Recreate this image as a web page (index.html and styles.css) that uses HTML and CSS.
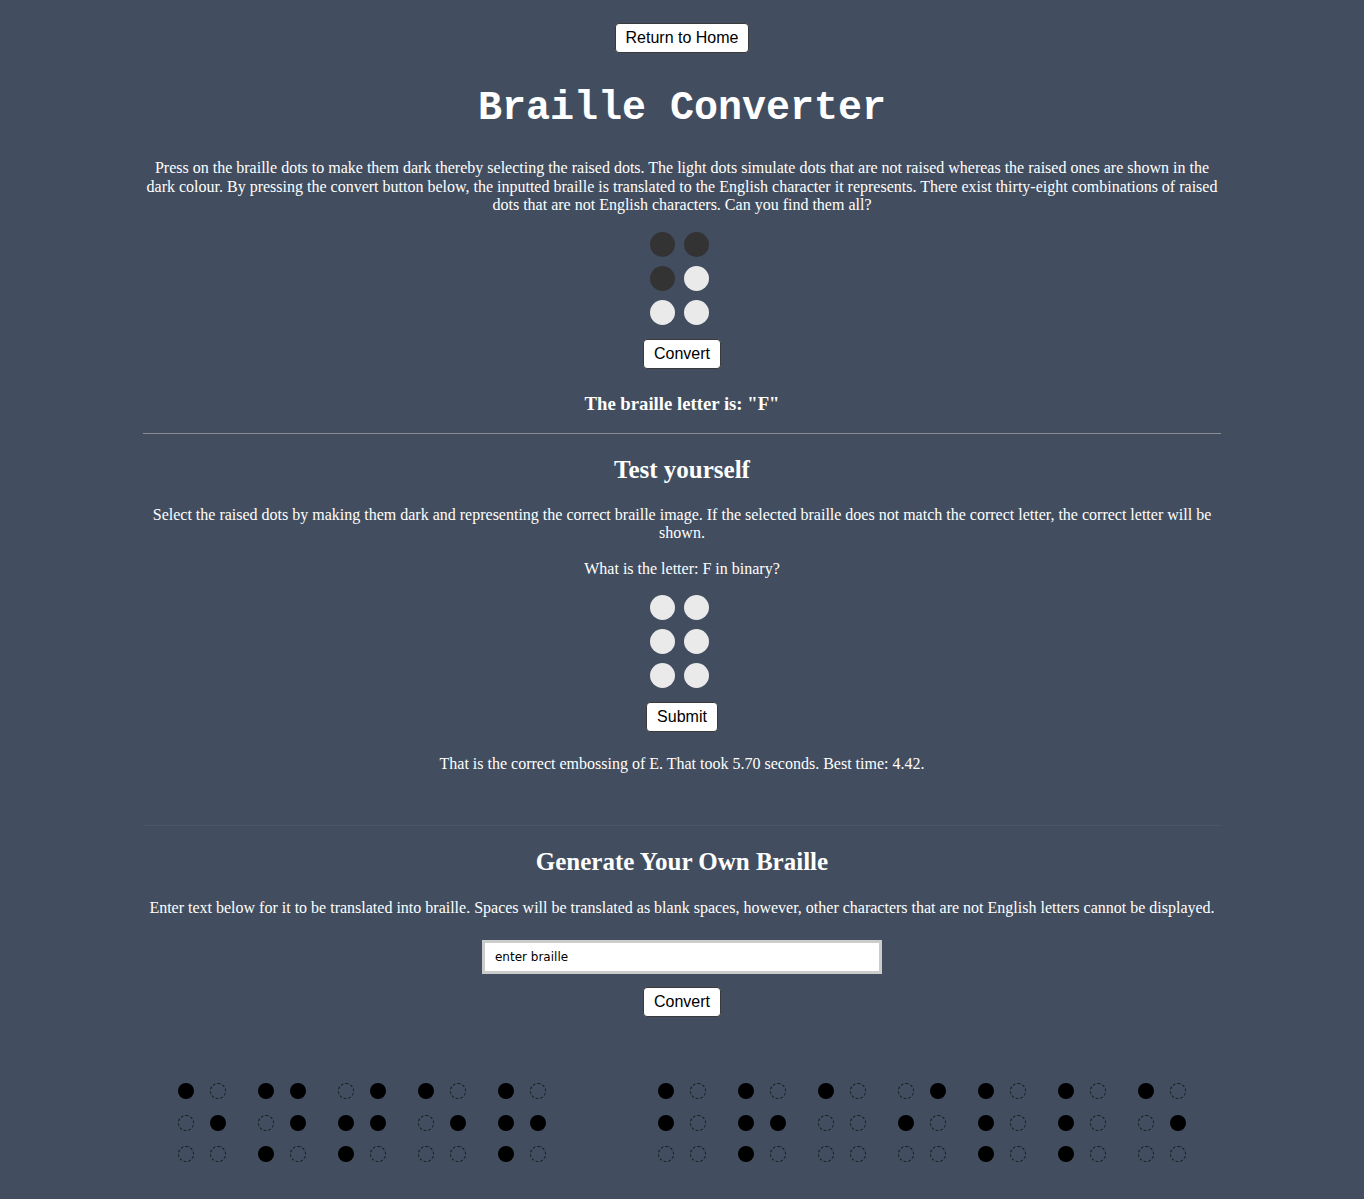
FILE: index.html
```html
<!DOCTYPE html>
<html>
<head>
<meta charset="utf-8">
<link rel="stylesheet" href="styles.css">
</head>
<body>
<div class="wrap">
  <div class="top"><button class="btn">Return to Home</button></div>
  <h1 class="title">Braille Converter</h1>
  <p class="intro">Press on the braille dots to make them dark thereby selecting the raised dots. The light dots simulate dots that are not raised whereas the raised ones are shown in the dark colour. By pressing the convert button below, the inputted braille is translated to the English character it represents. There exist thirty-eight combinations of raised dots that are not English characters. Can you find them all?</p>
  <div class="cell big">
    <span class="bd on"></span><span class="bd on"></span>
    <span class="bd on"></span><span class="bd"></span>
    <span class="bd"></span><span class="bd"></span>
  </div>
  <div class="row-btn"><button class="btn">Convert</button></div>
  <h3 class="result">The braille letter is: "F"</h3>
  <hr class="rule1">
  <h2 class="sec">Test yourself</h2>
  <p class="desc">Select the raised dots by making them dark and representing the correct braille image. If the selected braille does not match the correct letter, the correct letter will be shown.</p>
  <p class="q">What is the letter: F in binary?</p>
  <div class="cell big">
    <span class="bd"></span><span class="bd"></span>
    <span class="bd"></span><span class="bd"></span>
    <span class="bd"></span><span class="bd"></span>
  </div>
  <div class="row-btn"><button class="btn">Submit</button></div>
  <p class="msg">That is the correct embossing of E. That took 5.70 seconds. Best time: 4.42.</p>
  <hr class="rule2">
  <h2 class="sec">Generate Your Own Braille</h2>
  <p class="desc2">Enter text below for it to be translated into braille. Spaces will be translated as blank spaces, however, other characters that are not English letters cannot be displayed.</p>
  <div class="in-row"><input class="field" type="text" value="enter braille"></div>
  <div class="row-btn2"><button class="btn">Convert</button></div>
  <div class="output">
    <div class="sm"><i class="f"></i><i></i><i></i><i class="f"></i><i></i><i></i></div>
    <div class="sm"><i class="f"></i><i class="f"></i><i></i><i class="f"></i><i class="f"></i><i></i></div>
    <div class="sm"><i></i><i class="f"></i><i class="f"></i><i class="f"></i><i class="f"></i><i></i></div>
    <div class="sm"><i class="f"></i><i></i><i></i><i class="f"></i><i></i><i></i></div>
    <div class="sm"><i class="f"></i><i></i><i class="f"></i><i class="f"></i><i class="f"></i><i></i></div>
    <div class="sm blank"></div>
    <div class="sm"><i class="f"></i><i></i><i class="f"></i><i></i><i></i><i></i></div>
    <div class="sm"><i class="f"></i><i></i><i class="f"></i><i class="f"></i><i class="f"></i><i></i></div>
    <div class="sm"><i class="f"></i><i></i><i></i><i></i><i></i><i></i></div>
    <div class="sm"><i></i><i class="f"></i><i class="f"></i><i></i><i></i><i></i></div>
    <div class="sm"><i class="f"></i><i></i><i class="f"></i><i></i><i class="f"></i><i></i></div>
    <div class="sm"><i class="f"></i><i></i><i class="f"></i><i></i><i class="f"></i><i></i></div>
    <div class="sm"><i class="f"></i><i></i><i></i><i class="f"></i><i></i><i></i></div>
  </div>
</div>
</body>
</html>
```
FILE: styles.css
```css
html, body {
  background: #424e60;
}
body {
  margin: 8px;
  font-family: "Liberation Serif", "Times New Roman", serif;
  color: #fff;
}
.wrap {
  width: 80%;
  margin: 0 auto;
  text-align: center;
  display: flex;
  flex-direction: column;
  align-items: center;
}
.top {
  padding-top: 15px;
}
.btn {
  font-family: "Liberation Sans", Arial, sans-serif;
  font-size: 16px;
  height: 30px;
  padding: 0 10px;
  background: #fff;
  color: #000;
  border: 1px solid #3a3a3a;
  border-radius: 4px;
  line-height: 28px;
}
.title {
  font-family: "Liberation Mono", "Courier New", monospace;
  font-weight: bold;
  font-size: 40px;
  line-height: 45px;
  margin: 33px 0 0;
}
.intro, .desc, .desc2, .q, .msg {
  font-size: 16px;
  line-height: 18.5px;
  margin: 0;
}
.intro { margin-top: 28px; }
.cell.big {
  display: grid;
  grid-template-columns: 25px 25px;
  grid-auto-rows: 25px;
  gap: 9px;
  margin-top: 17px;
  padding-right: 5px;
}
.bd {
  width: 25px;
  height: 25px;
  border-radius: 50%;
  background: #eaeaea;
}
.bd.on {
  background: #333;
}
.row-btn { margin-top: 14px; }
.result {
  font-size: 18.72px;
  line-height: 22px;
  margin: 24px 0 0;
}
hr {
  width: 100%;
  margin: 0;
  border: 0;
  height: 1px;
}
.rule1 {
  margin-top: 18px;
  background: #8a8d92;
}
.rule2 {
  margin-top: 51px;
  background: #4c5869;
}
.sec {
  font-size: 25px;
  line-height: 28px;
  margin: 22px 0 0;
}
.desc { margin-top: 22px; }
.q { margin-top: 17px; }
.msg { margin-top: 23px; }
.desc2 { margin-top: 23px; }
.in-row { margin-top: 23px; }
.field {
  box-sizing: border-box;
  width: 400px;
  height: 34px;
  border: 3px solid #ccc;
  padding: 0 10px;
  font-family: "DejaVu Sans", Tahoma, sans-serif;
  font-size: 12px;
  color: #000;
  background: #fff;
  outline: none;
}
.row-btn2 { margin-top: 13px; }
.output {
  display: flex;
  margin-top: 66px;
}
.sm {
  width: 80px;
  display: grid;
  grid-template-columns: 16px 16px;
  column-gap: 16px;
  row-gap: 15.5px;
  grid-auto-rows: 16px;
  justify-content: center;
}
.sm i {
  box-sizing: border-box;
  width: 16px;
  height: 16px;
  border-radius: 50%;
  border: 1px dashed #1a1a1a;
}
.sm i.f {
  background: #000;
  border-color: #000;
}
```
